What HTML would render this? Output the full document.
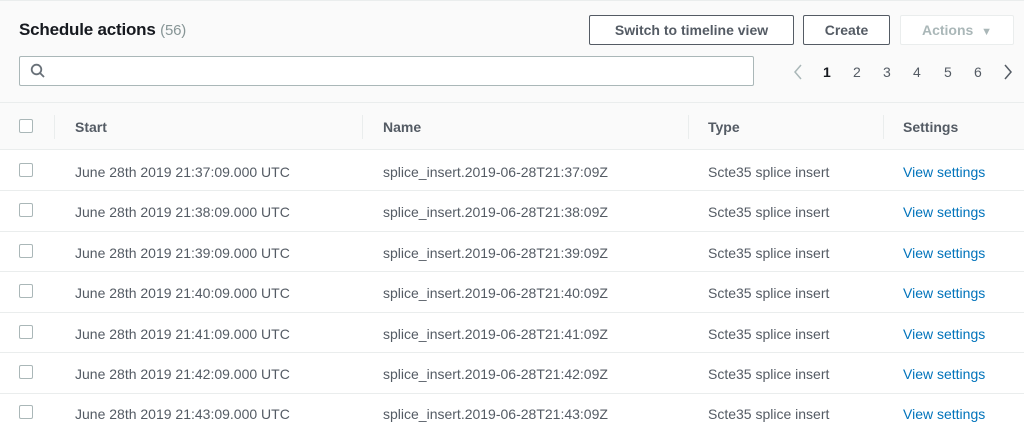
<!DOCTYPE html>
<html><head><style>
*{box-sizing:border-box;margin:0;padding:0}
body{width:1024px;height:428px;overflow:hidden;background:#fff;font-family:"Liberation Sans",sans-serif;font-size:14px;color:#545b64;position:relative}
.top{position:absolute;left:0;top:0;width:1024px;height:150px;background:#fafafa;border-top:1px solid #eaeded;border-bottom:1px solid #eaeded}
.a{position:absolute;white-space:nowrap}
.btn{position:absolute;top:15px;height:30px;border:1px solid #545b64;border-radius:2px;background:#fff;font-weight:bold;color:#545b64;text-align:center;line-height:28px;font-size:14px}
.cb{position:absolute;left:19px;width:14px;height:14px;border:1px solid #aab7b8;border-radius:2px;background:#fff}
.sep{position:absolute;top:115px;width:1px;height:24px;background:#eaeded}
.row{position:absolute;left:0;width:1024px;height:1px;background:#eaeded}
.link{color:#0073bb}
</style></head><body>
<div class="top"></div>
<div class="a" style="left:19px;top:20px;font-size:17px;font-weight:bold;color:#16191f;letter-spacing:-0.2px">Schedule actions <span style="font-weight:normal;color:#879596;font-size:15px">(56)</span></div>
<div class="btn" style="left:589px;width:205px">Switch to timeline view</div>
<div class="btn" style="left:803px;width:87px">Create</div>
<div class="btn" style="left:900px;width:114px;border-color:#eaeded;color:#aab7b8">Actions &nbsp;<span style="font-size:11px">▼</span></div>
<div class="a" style="left:19px;top:56px;width:735px;height:30px;border:1px solid #aab7b8;border-radius:2px;background:#fff"></div>
<svg class="a" style="left:30px;top:63px" width="16" height="16" viewBox="0 0 16 16"><circle cx="6.5" cy="6.5" r="4.8" fill="none" stroke="#687078" stroke-width="1.8"/><path d="M10 10l4 4" stroke="#687078" stroke-width="1.8"/></svg>
<svg class="a" style="left:792px;top:64px" width="12" height="16" viewBox="0 0 12 16"><path d="M9 1L3 8l6 7" fill="none" stroke="#aab7b8" stroke-width="1.5"/></svg>
<div class="a" style="left:823px;top:64px;font-weight:bold;color:#16191f">1</div>
<div class="a" style="left:853px;top:64px">2</div>
<div class="a" style="left:883px;top:64px">3</div>
<div class="a" style="left:913px;top:64px">4</div>
<div class="a" style="left:944px;top:64px">5</div>
<div class="a" style="left:974px;top:64px">6</div>
<svg class="a" style="left:1002px;top:64px" width="12" height="16" viewBox="0 0 12 16"><path d="M3 1l6 7-6 7" fill="none" stroke="#545b64" stroke-width="1.5"/></svg>
<div class="row" style="top:102px"></div>
<div class="cb" style="top:119px"></div>
<div class="sep" style="left:54px"></div><div class="sep" style="left:362px"></div><div class="sep" style="left:688px"></div><div class="sep" style="left:883px"></div>
<div class="a" style="left:75px;top:119px;font-weight:bold">Start</div>
<div class="a" style="left:383px;top:119px;font-weight:bold">Name</div>
<div class="a" style="left:708px;top:119px;font-weight:bold">Type</div>
<div class="a" style="left:903px;top:119px;font-weight:bold">Settings</div>
<div class="cb" style="top:163px"></div><div class="a" style="left:75px;top:164px">June 28th 2019 21:37:09.000 UTC</div><div class="a" style="left:383px;top:164px">splice_insert.2019-06-28T21:37:09Z</div><div class="a" style="left:708px;top:164px">Scte35 splice insert</div><div class="a link" style="left:903px;top:164px">View settings</div><div class="row" style="top:190px"></div>
<div class="cb" style="top:203px"></div><div class="a" style="left:75px;top:204px">June 28th 2019 21:38:09.000 UTC</div><div class="a" style="left:383px;top:204px">splice_insert.2019-06-28T21:38:09Z</div><div class="a" style="left:708px;top:204px">Scte35 splice insert</div><div class="a link" style="left:903px;top:204px">View settings</div><div class="row" style="top:231px"></div>
<div class="cb" style="top:244px"></div><div class="a" style="left:75px;top:245px">June 28th 2019 21:39:09.000 UTC</div><div class="a" style="left:383px;top:245px">splice_insert.2019-06-28T21:39:09Z</div><div class="a" style="left:708px;top:245px">Scte35 splice insert</div><div class="a link" style="left:903px;top:245px">View settings</div><div class="row" style="top:271px"></div>
<div class="cb" style="top:284px"></div><div class="a" style="left:75px;top:285px">June 28th 2019 21:40:09.000 UTC</div><div class="a" style="left:383px;top:285px">splice_insert.2019-06-28T21:40:09Z</div><div class="a" style="left:708px;top:285px">Scte35 splice insert</div><div class="a link" style="left:903px;top:285px">View settings</div><div class="row" style="top:312px"></div>
<div class="cb" style="top:325px"></div><div class="a" style="left:75px;top:326px">June 28th 2019 21:41:09.000 UTC</div><div class="a" style="left:383px;top:326px">splice_insert.2019-06-28T21:41:09Z</div><div class="a" style="left:708px;top:326px">Scte35 splice insert</div><div class="a link" style="left:903px;top:326px">View settings</div><div class="row" style="top:352px"></div>
<div class="cb" style="top:365px"></div><div class="a" style="left:75px;top:366px">June 28th 2019 21:42:09.000 UTC</div><div class="a" style="left:383px;top:366px">splice_insert.2019-06-28T21:42:09Z</div><div class="a" style="left:708px;top:366px">Scte35 splice insert</div><div class="a link" style="left:903px;top:366px">View settings</div><div class="row" style="top:393px"></div>
<div class="cb" style="top:405px"></div><div class="a" style="left:75px;top:406px">June 28th 2019 21:43:09.000 UTC</div><div class="a" style="left:383px;top:406px">splice_insert.2019-06-28T21:43:09Z</div><div class="a" style="left:708px;top:406px">Scte35 splice insert</div><div class="a link" style="left:903px;top:406px">View settings</div>
</body></html>
